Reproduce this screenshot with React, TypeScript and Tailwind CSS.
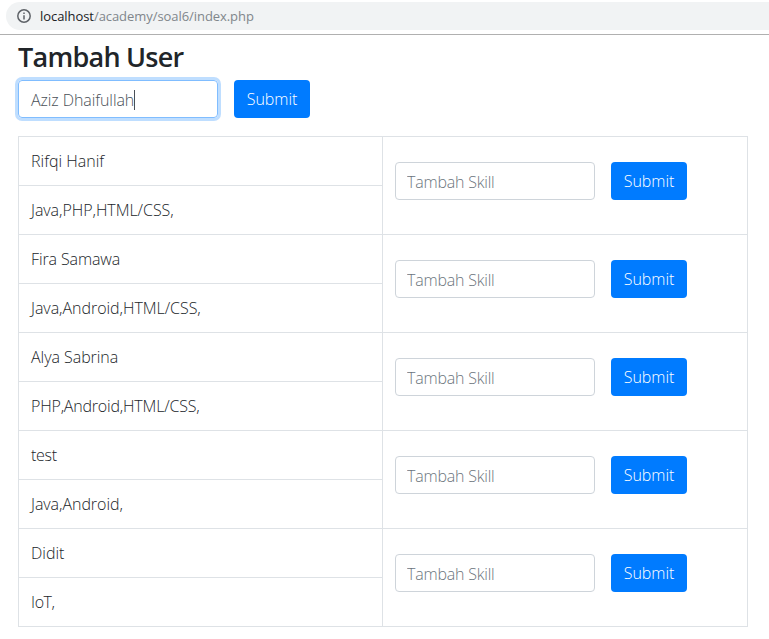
import React from "react";

type User = {
  name: string;
  nameClass: string;
  skills: string;
  skillsClass: string;
};

const users: User[] = [
  { name: "Rifqi Hanif", nameClass: "tracking-normal", skills: "Java,PHP,HTML/CSS,", skillsClass: "tracking-[-0.05px]" },
  { name: "Fira Samawa", nameClass: "tracking-[-0.12px]", skills: "Java,Android,HTML/CSS,", skillsClass: "tracking-[-0.04px]" },
  { name: "Alya Sabrina", nameClass: "tracking-[-0.04px]", skills: "PHP,Android,HTML/CSS,", skillsClass: "tracking-[-0.2px]" },
  { name: "test", nameClass: "tracking-[-0.3px]", skills: "Java,Android,", skillsClass: "tracking-[-0.05px]" },
  { name: "Didit", nameClass: "tracking-normal", skills: "IoT,", skillsClass: "tracking-[-0.4px]" },
];

function SubmitButton() {
  return (
    <button
      type="button"
      className="h-[38px] w-[76px] shrink-0 rounded bg-[#007bff] text-center text-base leading-6 tracking-[-0.05px] text-white"
    >
      Submit
    </button>
  );
}

function AddressBar() {
  return (
    <header className="h-[35px] border-b border-[#b0b0b0] pt-0.5 pl-1.5">
      <div className="flex h-7 items-center rounded-l-full bg-[#f1f3f4] pl-[11px]">
        <svg className="size-[14px] shrink-0" viewBox="0 0 14 14" fill="none">
          <circle cx="7" cy="7" r="6.2" stroke="#5f6368" strokeWidth="1.5" />
          <path d="M6.25 6.2h1.5v4.3h-1.5zM6.25 3.5h1.5v1.5h-1.5z" fill="#5f6368" />
        </svg>
        <span className="ml-[9px] text-[13px] leading-5 font-normal tracking-[-0.06px] whitespace-nowrap text-[#80868b]">
          <span className="text-[#202124]">localhost</span>/academy/soal6/index.php
        </span>
      </div>
    </header>
  );
}

export default function App() {
  return (
    <div className="h-[639px] w-[769px] overflow-hidden bg-white font-['Open_Sans','Noto_Sans',sans-serif] text-base font-light text-[#212529]">
      <AddressBar />
      <main className="pl-[18px]">
        <h1 className="h-[45px] pt-[5px] text-[27px] leading-[34px] font-semibold tracking-[-0.75px]">Tambah User</h1>
        <div className="flex gap-4">
          <div className="flex h-[38px] w-[200px] items-center rounded border border-[#80bdff] pt-0.5 pl-3 text-[#495057] shadow-[0_0_0_3px_rgba(0,123,255,0.25)]">
            <span className="tracking-[-0.08px]">Aziz Dhaifullah</span>
            <span className="h-5 w-px bg-[#495057]" />
          </div>
          <SubmitButton />
        </div>
        <div className="mt-[18px] w-[730px] border-t border-l border-[#dee2e6]">
          {users.map((user) => (
            <div key={user.name} className="flex h-[98px]">
              <div className="w-[364px] border-r border-[#dee2e6]">
                <div className="h-[49px] border-b border-[#dee2e6] pt-3 pl-3 leading-6">
                  <span className={user.nameClass}>{user.name}</span>
                </div>
                <div className="h-[49px] border-b border-[#dee2e6] pt-3 pl-3 leading-6">
                  <span className={user.skillsClass}>{user.skills}</span>
                </div>
              </div>
              <div className="flex flex-1 items-start gap-4 border-r border-b border-[#dee2e6] pt-[25px] pl-3">
                <input
                  type="text"
                  placeholder="Tambah Skill"
                  className="h-[38px] w-[200px] rounded border border-[#ced4da] pt-0.5 pl-[11px] tracking-[-0.2px] placeholder:text-[#6c757d]"
                />
                <SubmitButton />
              </div>
            </div>
          ))}
        </div>
      </main>
    </div>
  );
}
